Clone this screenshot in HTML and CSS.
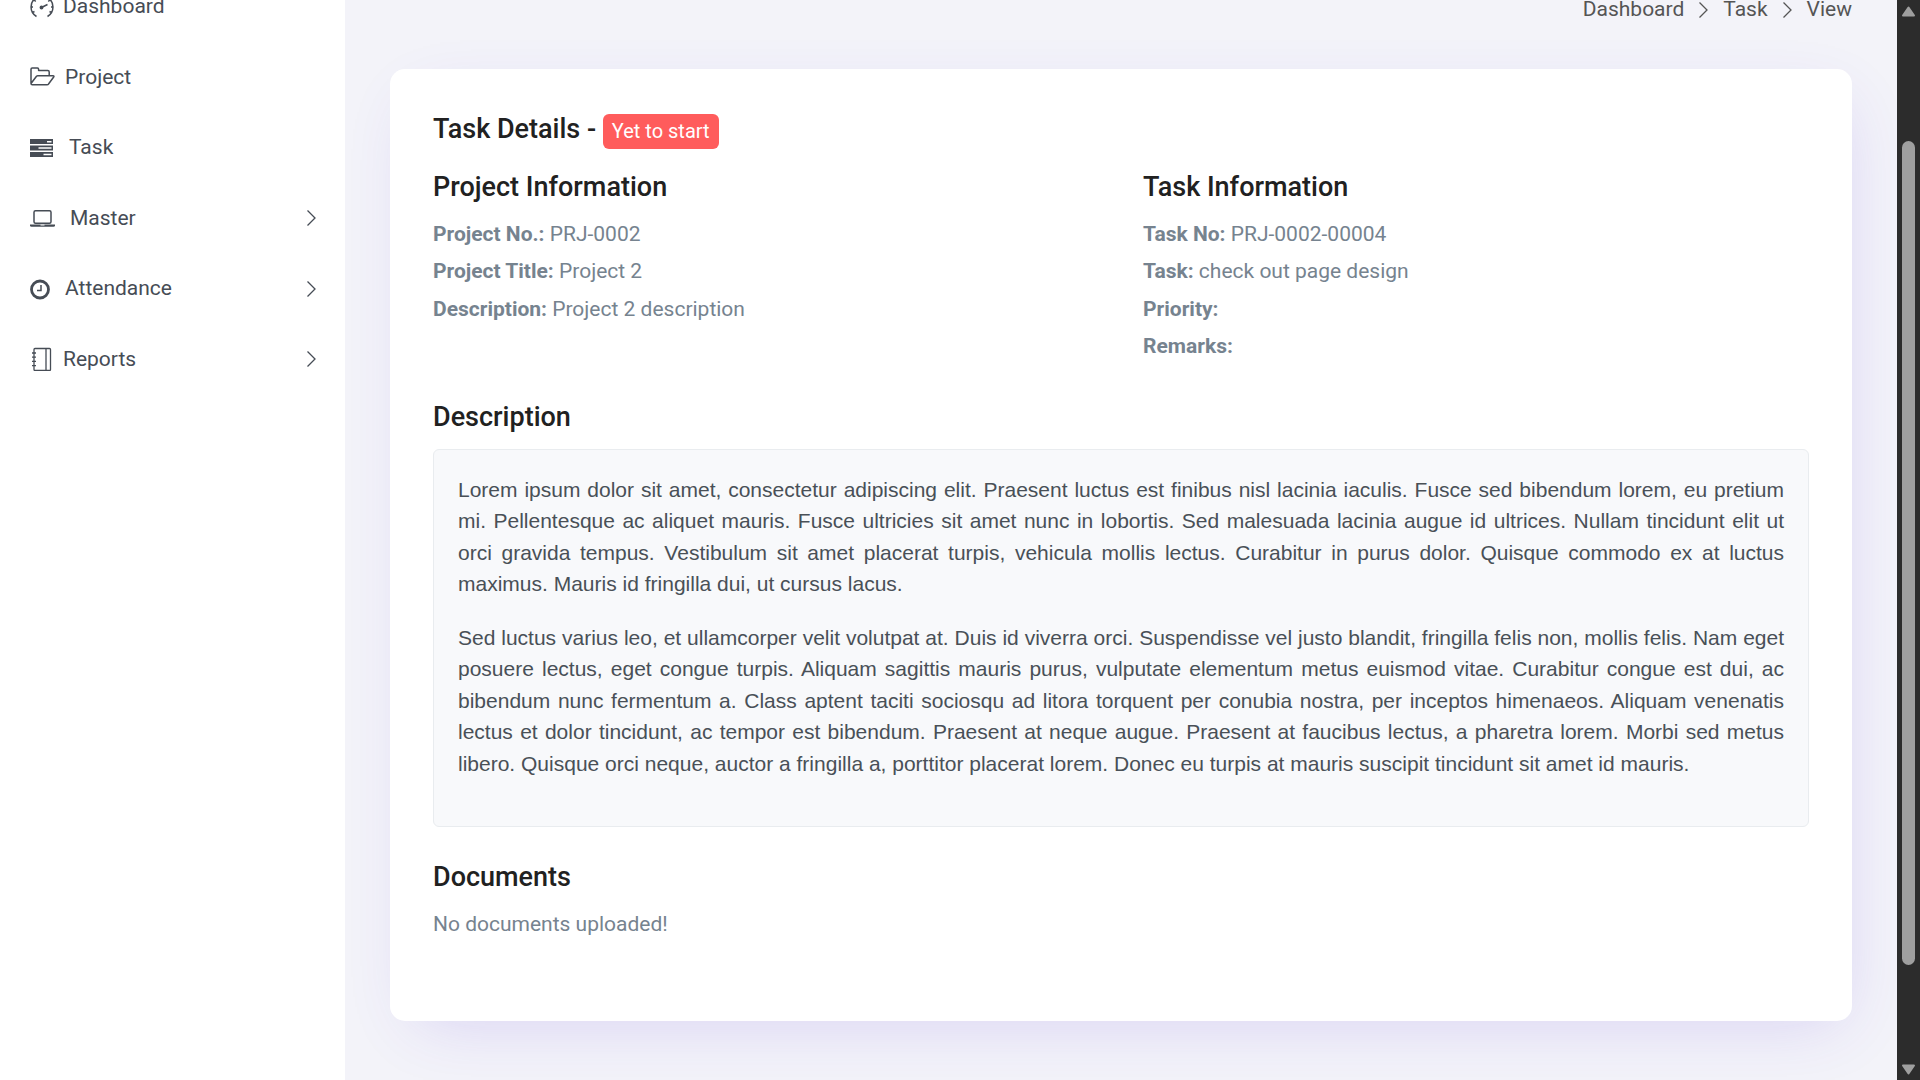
FILE: index.html
```html
<!DOCTYPE html>
<html lang="en">
<head>
    <meta charset="UTF-8">
    <meta name="viewport" content="width=device-width, initial-scale=1.0">
    <title>Task View</title>
    <link rel="stylesheet" href="styles.css">
</head>
<body>
    <div class="page">
        <aside class="sidebar">
            <nav class="menu">
                <a href="#" class="menu-item">
                    <svg width="24" height="24" viewBox="0 0 24 24" fill="none" stroke="currentColor" stroke-width="1.5"><path d="M6.500 21.500A11 11 0 0 1 6.500 2.500M17.500 21.500A11 11 0 0 0 17.500 2.500M6.500 2.500Q12 0 17.500 2.500M1 12h2M21 12h2M2.500 17.500l2-1M21.500 17.500l-2-1M4.200 5l1.500 1.500M19.800 5l-1.500 1.500M11.500 12.500l6-3"/><circle cx="11.500" cy="12.500" r="1.200" fill="currentColor"/></svg>
                    <span>Dashboard</span>
                </a>
                <a href="#" class="menu-item">
                    <svg width="26" height="24" viewBox="0 0 26 24" fill="none" stroke="currentColor" stroke-width="1.5" stroke-linejoin="round"><path d="M1 18.500V4.200Q1 3 2.200 3H7.500Q8.600 3 8.600 4.200V5.500H17.800Q19.200 5.500 19.200 7V10.800M1 18.500L6.500 11.300Q7 10.800 7.800 10.800H23Q24.500 10.800 23.700 12L18.700 18.800Q18.100 19.800 17 19.800H2.300Q1 19.800 1 18.500Z"/></svg>
                    <span>Project</span>
                </a>
                <a href="#" class="menu-item">
                    <svg width="30" height="24" viewBox="0 0 30 24" fill="currentColor" fill-rule="evenodd"><path d="M0 3h23v5H0zM17 5v1.400h4.500V5zM0 9.500h23v5H0zM8.500 11.300v1.400h13v-1.400zM0 16h23v5H0zM13.500 17.800v1.400h8v-1.400z"/></svg>
                    <span>Task</span>
                </a>
                <a href="#" class="menu-item">
                    <svg width="31" height="24" viewBox="0 0 31 24" fill="none" stroke="currentColor" stroke-width="1.500"><rect x="4" y="4.700" width="17" height="12.500" rx="1.500"/><path d="M0 18.500h25v.800q0 1.500-1.500 1.500H1.500Q0 20.800 0 19.300z" fill="currentColor" stroke="none"/><path d="M10.500 19h4" stroke="#fff" stroke-width="1"/></svg>
                    <span>Master</span>
                    <svg class="arrow" width="9" height="18" viewBox="0 0 9 18"><path d="M.5 1.500L8 9L.5 16.500"/></svg>
                </a>
                <a href="#" class="menu-item">
                    <svg width="26" height="24" viewBox="0 0 26 24" fill="none" stroke="currentColor"><circle cx="10" cy="12.500" r="8.500" stroke-width="2.800"/><path d="M11 8v5.500H7" stroke-width="1.500"/></svg>
                    <span>Attendance</span>
                    <svg class="arrow" width="9" height="18" viewBox="0 0 9 18"><path d="M.5 1.500L8 9L.5 16.500"/></svg>
                </a>
                <a href="#" class="menu-item">
                    <svg width="24" height="24" viewBox="0 0 24 24" fill="none" stroke="currentColor" stroke-width="1.300"><rect x="4" y="1.500" width="16.500" height="22" rx="1"/><path d="M16 1.500v22M2 6h4M2 10.200h4M2 14.400h4M2 18.600h4"/></svg>
                    <span>Reports</span>
                    <svg class="arrow" width="9" height="18" viewBox="0 0 9 18"><path d="M.5 1.500L8 9L.5 16.500"/></svg>
                </a>
            </nav>
        </aside>

        <main class="content">
            <nav class="breadcrumb" aria-label="Breadcrumb">
                <a href="#">Dashboard</a>
                <svg class="arrow" width="9" height="18" viewBox="0 0 9 18"><path d="M.5 1.500L8 9L.5 16.500"/></svg>
                <a href="#">Task</a>
                <svg class="arrow" width="9" height="18" viewBox="0 0 9 18"><path d="M.5 1.500L8 9L.5 16.500"/></svg>
                <span>View</span>
            </nav>

            <section class="card">
                <h1 class="title">Task Details - <span class="badge">Yet to start</span></h1>

                <div class="info">
                    <div>
                        <h2>Project Information</h2>
                        <p><strong>Project No.:</strong> PRJ-0002</p>
                        <p><strong>Project Title:</strong> Project 2</p>
                        <p><strong>Description:</strong> Project 2 description</p>
                    </div>
                    <div>
                        <h2>Task Information</h2>
                        <p><strong>Task No:</strong> PRJ-0002-00004</p>
                        <p><strong>Task:</strong> check out page design</p>
                        <p><strong>Priority:</strong></p>
                        <p><strong>Remarks:</strong></p>
                    </div>
                </div>

                <h2>Description</h2>
                <div class="description">
                    <p>Lorem ipsum dolor sit amet, consectetur adipiscing elit. Praesent luctus est finibus nisl lacinia iaculis. Fusce sed bibendum lorem, eu pretium mi. Pellentesque ac aliquet mauris. Fusce ultricies sit amet nunc in lobortis. Sed malesuada lacinia augue id ultrices. Nullam tincidunt elit ut orci gravida tempus. Vestibulum sit amet placerat turpis, vehicula mollis lectus. Curabitur in purus dolor. Quisque commodo ex at luctus maximus. Mauris id fringilla dui, ut cursus lacus.</p>
                    <p>Sed luctus varius leo, et ullamcorper velit volutpat at. Duis id viverra orci. Suspendisse vel justo blandit, fringilla felis non, mollis felis. Nam eget posuere lectus, eget congue turpis. Aliquam sagittis mauris purus, vulputate elementum metus euismod vitae. Curabitur congue est dui, ac bibendum nunc fermentum a. Class aptent taciti sociosqu ad litora torquent per conubia nostra, per inceptos himenaeos. Aliquam venenatis lectus et dolor tincidunt, ac tempor est bibendum. Praesent at neque augue. Praesent at faucibus lectus, a pharetra lorem. Morbi sed metus libero. Quisque orci neque, auctor a fringilla a, porttitor placerat lorem. Donec eu turpis at mauris suscipit tincidunt sit amet id mauris.</p>
                </div>

                <h2>Documents</h2>
                <p>No documents uploaded!</p>
            </section>
        </main>

        <div class="scrollbar" aria-hidden="true">
            <svg width="15" height="11" viewBox="0 0 15 11"><path d="M7.500 1.500L13 9.500H2z"/></svg>
            <div class="scroll-track">
                <div class="scroll-thumb"></div>
            </div>
            <svg width="15" height="11" viewBox="0 0 15 11"><path d="M7.500 9.500L13 1.500H2z"/></svg>
        </div>
    </div>
</body>
</html>
```

FILE: styles.css
```css
* {
    margin: 0;
    padding: 0;
    box-sizing: border-box;
}

body {
    font-family: Roboto, "Liberation Sans", sans-serif;
    font-size: 21px;
    line-height: 1.5;
    color: #76838f;
    background: #f3f3f9;
    overflow: hidden;
}

a {
    color: inherit;
    text-decoration: none;
}

.page {
    display: flex;
    height: 100vh;
    overflow: hidden;
}

/* Sidebar */
.sidebar {
    flex: 0 0 345px;
    background: #fff;
    overflow: hidden;
}

.menu {
    margin-top: -28px;
}

.menu-item {
    display: flex;
    align-items: center;
    gap: 9px;
    padding: 19px 29px 19px 30px;
    margin-bottom: 1px;
    color: #464c55;
}

.arrow {
    fill: none;
    stroke: currentColor;
    stroke-width: 1.3;
}

.menu-item .arrow {
    margin-left: auto;
}

/* Content */
.content {
    flex: 1;
    min-width: 0;
    padding: 0 45px;
    overflow: hidden;
}

.breadcrumb {
    display: flex;
    align-items: center;
    justify-content: flex-end;
    gap: 15px;
    margin-top: -6px;
    margin-bottom: 43px;
    color: #555;
}

.card {
    padding: 44px 43px 74px;
    background: #fff;
    border-radius: 15px;
    box-shadow: 8px 18px 64px -20px rgba(89, 54, 220, 0.19);
}

h1,
h2 {
    margin-bottom: 16px;
    font-size: 27px;
    font-weight: 500;
    line-height: 32px;
    color: #212121;
}

.title {
    margin-bottom: 22px;
}

.badge {
    display: inline-block;
    padding: 4px 9px;
    border-radius: 6px;
    background: #ff5c5c;
    color: #fff;
    font-size: 20px;
    font-weight: 400;
    line-height: 27px;
}

.card p {
    margin-bottom: 6px;
}

.info {
    display: grid;
    grid-template-columns: 1fr 1fr;
    gap: 44px;
    margin-bottom: 32px;
}

.description {
    padding: 24px 24px 25px;
    margin-bottom: 34px;
    border: 1px solid #e9ecef;
    border-radius: 6px;
    background: #f8f9fb;
    color: #495057;
    font-family: "Liberation Sans", Arial, sans-serif;
    text-align: justify;
}

.card .description p {
    margin-bottom: 22px;
}

/* Scrollbar */
.scrollbar {
    display: flex;
    flex: 0 0 23px;
    flex-direction: column;
    align-items: center;
    padding: 6px 0 5px;
    background: #2c2c2c;
}

.scrollbar svg {
    fill: #9f9f9f;
    stroke: #9f9f9f;
    stroke-width: 2;
    stroke-linejoin: round;
}

.scroll-track {
    display: flex;
    flex: 1;
    padding: 124px 0 99px;
}

.scroll-thumb {
    width: 13px;
    border-radius: 7px;
    background: #9f9f9f;
}
```
